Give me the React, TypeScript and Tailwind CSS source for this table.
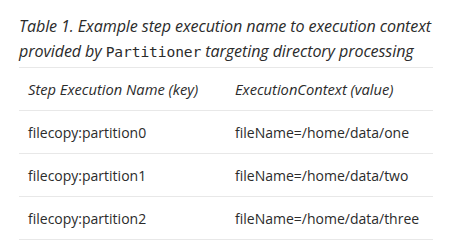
import React from 'react';

const rows = [
  ['filecopy:partition0', 'fileName=/home/data/one'],
  ['filecopy:partition1', 'fileName=/home/data/two'],
  ['filecopy:partition2', 'fileName=/home/data/three'],
];

const App = () => {
  return (
    <div className="w-[456px] h-[245px] bg-white pt-[14px] pl-[19px] text-[#2b2b2b]" style={{ fontFamily: '"Open Sans", sans-serif' }}>
      <div className="w-[414px]">
        {/* Caption */}
        <div className="italic text-[16.1px] leading-[25px] pb-[3px] border-b border-[#e8e8e8] tracking-[-0.1px] whitespace-nowrap">
          Table 1. Example step execution name to execution context
          <br />
          provided by{' '}
          <span className="text-[14.6px] not-italic" style={{ fontFamily: '"DejaVu Sans Mono", monospace' }}>Partitioner</span>{' '}
          targeting directory processing
        </div>

        {/* Header */}
        <div className="flex h-[43px] items-center border-b border-[#e8e8e8] italic text-[14.7px]">
          <div className="w-[216px] pl-[9px]">Step Execution Name (key)</div>
          <div>ExecutionContext (value)</div>
        </div>

        {rows.map(([k, v]) => (
          <div key={k} className="flex h-[43px] items-center border-b border-[#e8e8e8] text-[14px]">
            <div className="w-[216px] pl-[9px]">{k}</div>
            <div>{v}</div>
          </div>
        ))}
      </div>
    </div>
  );
};

export default App;
